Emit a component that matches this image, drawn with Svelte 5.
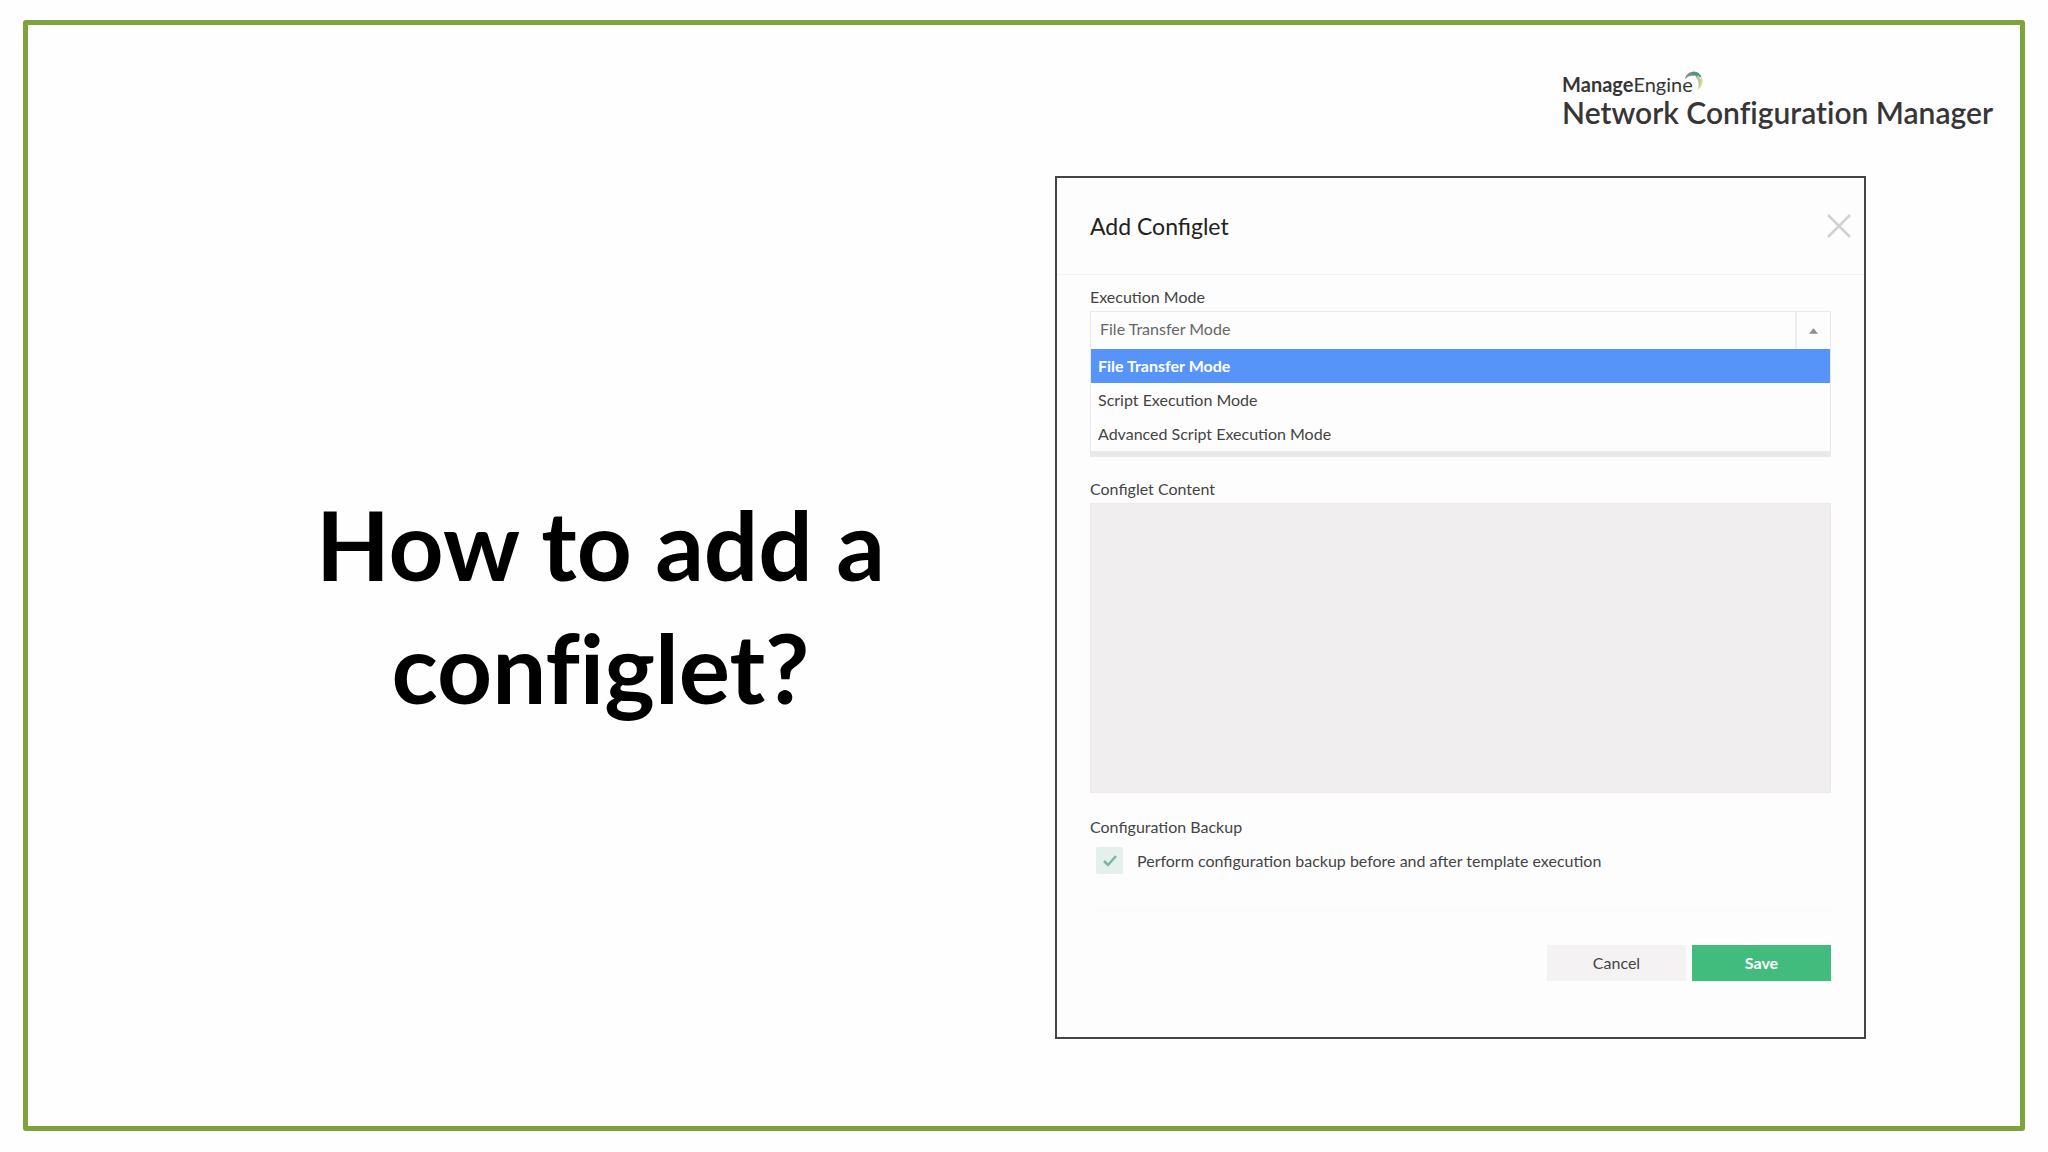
<script lang="ts">
  // Slide with the question on the left and the "Add Configlet"
  // dialog on the right, its execution mode menu open.

  const modes = [
    "File Transfer Mode",
    "Script Execution Mode",
    "Advanced Script Execution Mode",
  ];

  let mode = $state(modes[0]);
  let menuOpen = $state(true);
  let content = $state("");
  let backup = $state(true);

  function pick(m: string) {
    mode = m;
  }
</script>

<div class="slide">
  <div class="frame">
    <header class="brand">
      <div class="brand-block">
        <div class="maker">
          <span><b>Manage</b>Engine</span>
          <svg class="swirl" viewBox="0 0 24 24" aria-hidden="true">
            <path d="M1 10C2 4 7 0 13 1l-1 5C8 5 5 6 1 10z" fill="#858b8a" />
            <path d="M10 1c5-1 9 1 11 6l-5 2c-1-3-3-4-7-5z" fill="#4f9583" />
            <path d="M17 5c4 3 5 10 0 16 1-5 1-10-3-13z" fill="#b3cba0" />
            <path d="M21 7c3 5 1 12-5 16 3-5 4-9 5-16z" fill="#d9d68f" />
          </svg>
        </div>
        <div class="product">Network Configuration Manager</div>
      </div>
    </header>

    <main class="content">
      <h1 class="question">How to add a<br />configlet?</h1>

      <section class="dialog" aria-labelledby="dialog-title">
        <div class="dialog-head">
          <h2 id="dialog-title">Add Configlet</h2>
          <button class="close" type="button" aria-label="Close">
            <svg viewBox="0 0 24 24" aria-hidden="true">
              <path d="M1 1l22 22M23 1L1 23" fill="none" stroke="#d2d1d2" stroke-width="2.5" />
            </svg>
          </button>
        </div>

        <form class="dialog-body" onsubmit={(e) => e.preventDefault()}>
          <label class="label" for="mode">Execution Mode</label>
          <div class="select-row">
            <select id="mode" bind:value={mode}>
              {#each modes as m}
                <option value={m}>{m}</option>
              {/each}
            </select>
            <button
              class="toggle"
              type="button"
              aria-label="Toggle modes"
              aria-expanded={menuOpen}
              onclick={() => (menuOpen = !menuOpen)}
            >
              <svg viewBox="0 0 10 6" aria-hidden="true"><path d="M5 0l5 6H0z" fill="#8c8c8c" /></svg>
            </button>
          </div>
          {#if menuOpen}
            <div class="menu">
              {#each modes as m}
                <button class="item" class:active={m === mode} type="button" onclick={() => pick(m)}>
                  {m}
                </button>
              {/each}
            </div>
          {/if}

          <label class="label content-label" for="content">Configlet Content</label>
          <textarea id="content" bind:value={content}></textarea>

          <fieldset class="backup">
            <legend class="label">Configuration Backup</legend>
            <label class="check">
              <span class="box">
                <input type="checkbox" bind:checked={backup} />
                {#if backup}
                  <svg viewBox="0 0 14 12" aria-hidden="true">
                    <path d="M1 6l4 4 8-9" fill="none" stroke="#7fb5a3" stroke-width="2.5" />
                  </svg>
                {/if}
              </span>
              <span>Perform configuration backup before and after template execution</span>
            </label>
          </fieldset>

          <div class="actions">
            <button class="btn" type="button">Cancel</button>
            <button class="btn save" type="submit">Save</button>
          </div>
        </form>
      </section>
    </main>
  </div>
</div>

<style>
  :global(body) {
    margin: 0;
    background: #fefefe;
  }
  .slide, .slide * { box-sizing: border-box; }
  .slide {
    display: flex;
    min-height: 100vh;
    padding: 20px 23px 21px;
    font-family: Lato, "Open Sans", sans-serif;
    font-size: 16px;
    line-height: 20px;
    color: #444;
  }
  .slide button, .slide select, .slide textarea { font: inherit; }
  .frame {
    flex: 1;
    display: flex;
    flex-direction: column;
    border: 5px solid #7da33b;
    border-radius: 3px;
  }

  .brand {
    display: flex;
    justify-content: flex-end;
    padding: 45px 27px 0 0;
    color: #383536;
    font-variant-ligatures: none;
  }
  .maker {
    display: flex;
    font-size: 20px;
    line-height: 28px;
  }
  .swirl {
    width: 20px;
    height: 22px;
    margin-left: -9px;
  }
  .product {
    font-size: 30px;
    font-weight: 600;
    line-height: 28px;
  }

  .content {
    flex: 1;
    display: grid;
    grid-template-columns: 1027fr 811fr 154fr;
    align-items: start;
    padding-top: 50px;
  }
  .question {
    margin: 0;
    padding: 306px 0 0 118px;
    font-size: 96px;
    font-weight: 700;
    font-variant-ligatures: none;
    line-height: 123px;
    text-align: center;
    color: #000;
  }

  .dialog {
    border: 2px solid #444;
    background: #fefdfe;
  }
  .dialog-head {
    display: flex;
    align-items: center;
    justify-content: space-between;
    height: 97px;
    padding: 0 13px 1px 33px;
    border-bottom: 1px solid #f5f3f4;
  }
  .dialog-head h2 {
    margin: 0;
    font-size: 23px;
    font-weight: 400;
    line-height: 28px;
    color: #222;
  }
  .close {
    display: flex;
    padding: 0;
    border: 0;
    background: none;
    cursor: pointer;
  }
  .close svg { width: 24px; height: 24px; }

  .dialog-body {
    display: flex;
    flex-direction: column;
    padding: 8px 33px 56px;
  }
  .label {
    padding: 0;
    line-height: 28px;
  }
  .select-row {
    display: flex;
    height: 38px;
    border: 1px solid #eae8e9;
    border-bottom: 0;
  }
  .select-row select {
    flex: 1;
    appearance: none;
    padding: 0 9px 4px;
    border: 0;
    background: none;
    color: #666;
  }
  .toggle {
    display: flex;
    align-items: center;
    justify-content: center;
    width: 35px;
    padding: 0;
    border: 0;
    border-left: 2px solid #eeecee;
    background: none;
    cursor: pointer;
  }
  .toggle svg { width: 9px; height: 6px; }
  .menu {
    display: flex;
    flex-direction: column;
    border: 1px solid #eae8e9;
    border-width: 0 1px 6px;
  }
  .item {
    height: 34px;
    padding: 0 7px;
    border: 0;
    background: none;
    color: #444;
    text-align: left;
    cursor: pointer;
  }
  .slide .item.active {
    background: #5794fa;
    color: #fff;
    font-weight: 700;
  }
  .content-label { margin-top: 18px; }
  textarea {
    height: 290px;
    padding: 8px;
    border: 1px solid #ebe9ea;
    background: #f0eeef;
    resize: none;
  }
  .backup {
    margin: 20px 0 0;
    padding: 0;
    border: 0;
  }
  .check {
    display: flex;
    align-items: center;
    gap: 14px;
    padding: 6px;
  }
  .box {
    display: grid;
    place-items: center;
  }
  .box input, .box svg { grid-area: 1 / 1; }
  .box input {
    appearance: none;
    width: 27px;
    height: 27px;
    margin: 0;
    border-radius: 2px;
    background: #e3f0ec;
  }
  .box svg {
    width: 14px;
    height: 12px;
    pointer-events: none;
  }
  .actions {
    display: flex;
    justify-content: flex-end;
    gap: 6px;
    margin-top: 30px;
    padding-top: 34px;
    border-top: 1px solid #fbfafb;
  }
  .btn {
    width: 139px;
    height: 36px;
    padding: 0;
    border: 0;
    background: #f4f2f3;
    color: #444;
    cursor: pointer;
  }
  .slide .btn.save {
    background: #41bc7d;
    color: #fff;
    font-weight: 700;
  }
</style>
